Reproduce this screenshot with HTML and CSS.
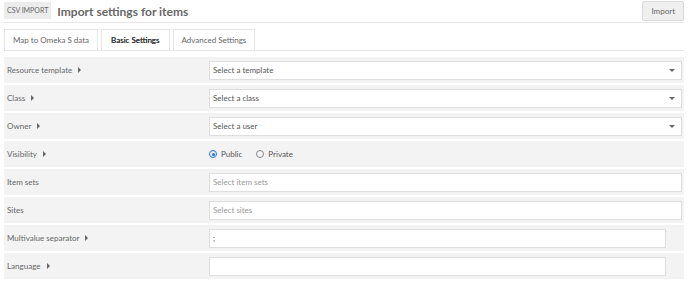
FILE: index.html
```html
<!DOCTYPE html>
<html lang="en">
<head>
    <meta charset="UTF-8">
    <title>Import settings for items</title>
    <link rel="stylesheet" href="styles.css">
</head>
<body>
    <header class="top-bar">
        <span class="module-tag">CSV IMPORT</span>
        <h1>Import settings for items</h1>
        <button class="import-btn">Import</button>
    </header>

    <nav class="tabs">
        <a class="tab">Map to Omeka S data</a>
        <a class="tab active">Basic Settings</a>
        <a class="tab">Advanced Settings</a>
    </nav>

    <div class="fields">
        <div class="field">
            <label class="field-label">Resource template <span class="caret"></span></label>
            <div class="field-input"><div class="select">Select a template<span class="down"></span></div></div>
        </div>
        <div class="field">
            <label class="field-label">Class <span class="caret"></span></label>
            <div class="field-input"><div class="select">Select a class<span class="down"></span></div></div>
        </div>
        <div class="field">
            <label class="field-label">Owner <span class="caret"></span></label>
            <div class="field-input"><div class="select">Select a user<span class="down"></span></div></div>
        </div>
        <div class="field">
            <label class="field-label">Visibility <span class="caret"></span></label>
            <div class="field-input radios">
                <span class="radio checked"></span><span class="radio-text">Public</span>
                <span class="radio"></span><span class="radio-text">Private</span>
            </div>
        </div>
        <div class="field">
            <label class="field-label">Item sets</label>
            <div class="field-input"><div class="chosen">Select item sets</div></div>
        </div>
        <div class="field">
            <label class="field-label">Sites</label>
            <div class="field-input"><div class="chosen">Select sites</div></div>
        </div>
        <div class="field">
            <label class="field-label">Multivalue separator <span class="caret"></span></label>
            <div class="field-input short"><div class="text-input">;</div></div>
        </div>
        <div class="field">
            <label class="field-label">Language <span class="caret"></span></label>
            <div class="field-input short"><div class="text-input"></div></div>
        </div>
    </div>
</body>
</html>
```

FILE: styles.css
```css
body {
    margin: 0;
    padding: 0 6px 0 4px;
    font-family: Lato, "Open Sans", sans-serif;
    color: #676767;
    background: #fff;
}

/* barre du haut */
.top-bar {
    display: flex;
    align-items: center;
    height: 22px;
    border-bottom: 1px solid #e6e6e6;
}
.module-tag {
    background: #ececec;
    color: #676767;
    font-size: 7px;
    padding: 5px 3px;
    line-height: 7px;
    margin-top: -1px;
}
h1 {
    margin: 0 0 0 6px;
    font-size: 12px;
    font-weight: 700;
    color: #676767;
    flex: 1;
}
.import-btn {
    font-family: inherit;
    font-size: 8px;
    color: #676767;
    background: #efefef;
    border: 1px solid #d9d9d9;
    border-radius: 2px;
    padding: 4px 8px;
    margin-top: -1px;
}

/* onglets */
.tabs {
    display: flex;
    gap: 3px;
    margin-top: 6px;
    border-bottom: 1px solid #e6e6e6;
}
.tab {
    font-size: 8px;
    line-height: 10px;
    padding: 5px 8px 5px;
    border: 1px solid #e6e6e6;
    border-bottom: none;
    color: #676767;
}
.tab.active {
    color: #333;
    padding: 5px 9px 5px;
    text-shadow: 0 0 0.3px #333;
}

/* champs */
.fields {
    margin-top: 6px;
    display: flex;
    flex-direction: column;
    gap: 2px;
}
.field {
    display: flex;
    align-items: center;
    background: #f3f3f3;
    height: 26px;
}
.field-label {
    width: 202px;
    padding-left: 3px;
    font-size: 8px;
    color: #676767;
}
.caret {
    display: inline-block;
    width: 0;
    height: 0;
    border-left: 3px solid #676767;
    border-top: 3px solid transparent;
    border-bottom: 3px solid transparent;
    margin-left: 4px;
}
.field-input {
    flex: 1;
    margin-right: 2px;
}
.field-input.short {
    margin-right: 18px;
}
.select, .chosen, .text-input {
    background: #fff;
    border: 1px solid #dedede;
    height: 19px;
    box-sizing: border-box;
    font-size: 8px;
    padding: 0 3px;
    display: flex;
    align-items: center;
}
.select {
    color: #555;
    justify-content: space-between;
}
.chosen {
    color: #999;
}
.text-input {
    color: #555;
    height: 19px;
}
.down {
    width: 0;
    height: 0;
    border-top: 3px solid #676767;
    border-left: 3px solid transparent;
    border-right: 3px solid transparent;
    margin-right: 3px;
}
.radios {
    display: flex;
    align-items: center;
    font-size: 8px;
    padding-left: 0;
}
.radio {
    width: 6px;
    height: 6px;
    border: 1px solid #888;
    border-radius: 50%;
    margin: 0 4px 0 0;
    position: relative;
}
.radio.checked {
    border-color: #1a73e8;
}
.radio.checked::after {
    content: "";
    position: absolute;
    left: 1.5px;
    top: 1.5px;
    width: 3px;
    height: 3px;
    border-radius: 50%;
    background: #1a73e8;
}
.radio-text {
    margin-right: 14px;
    color: #555;
}
```
